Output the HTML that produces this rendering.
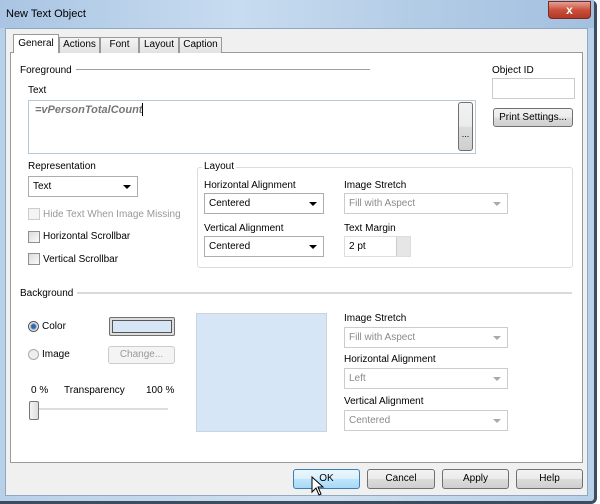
<!DOCTYPE html>
<html><head><style>
*{box-sizing:border-box;margin:0;padding:0}
body{width:600px;height:504px;background:#fff;position:relative;overflow:hidden;font-family:"Liberation Sans",sans-serif;font-size:10px;color:#000}
.a{position:absolute}
.lbl{position:absolute;font-size:10px;white-space:nowrap;line-height:13px}
.sel{position:absolute;background:#fff;border:1px solid #abadb3;height:21px;padding:3px 4px;font-size:10px;line-height:13px}
.sel.d{border-color:#ccc;color:#8a8a8a}
.arr{position:absolute;right:6px;top:8px;width:0;height:0;border-left:4px solid transparent;border-right:4px solid transparent;border-top:4px solid #000}
.sel.d .arr{border-top-color:#aaa}
.btn{position:absolute;border:1px solid #707070;border-radius:3px;background:linear-gradient(#f2f2f2,#ebebeb 50%,#dcdcdc 51%,#cfcfcf);text-align:center;font-size:10px}
.cb{position:absolute;width:12px;height:12px;border:1px solid #8e8f8f;background:linear-gradient(135deg,#dcdcdc,#fafafa)}
.tab{position:absolute;top:37px;height:16px;border:1px solid #999;border-bottom:none;background:linear-gradient(#f4f4f4,#e2e2e2);font-size:10px;text-align:center;line-height:14px}
</style></head><body>
<div class="a" style="left:0;top:0;width:597px;height:504px;background:linear-gradient(90deg,#b8d0e8,#cfe0f2 50%,#b8d0e8);border-right:3px solid #3b4d5f;border-bottom:3px solid #3b4d5f;border-radius:0 6px 6px 0"></div>
<div class="a" style="left:0;top:0;width:594px;height:28px;background:linear-gradient(90deg,#a9c5e3,#c8dcf0 40%,#b3cce6 70%,#a3c0df)"></div>
<div class="lbl" style="left:6px;top:8px;font-size:11px">New Text Object</div>
<div class="a" style="left:548px;top:1px;width:43px;height:18px;border:1px solid #7a2a22;border-radius:0 0 4px 4px;background:linear-gradient(#e8a090,#c9503c 50%,#b23a25);color:#fff;text-align:center;font-weight:bold;font-size:12px;line-height:16px">x</div>
<div class="a" style="left:5px;top:28px;width:583px;height:468px;background:#f0f0f0;border:1px solid #8fa7c0"></div>
<div class="a" style="left:10px;top:52px;width:573px;height:411px;background:#fff;border:1px solid #9a9a9a"></div>
<div class="tab" style="left:13px;top:34px;width:46px;height:19px;background:#fff;line-height:18px;z-index:2">General</div>
<div class="tab" style="left:59px;width:41px">Actions</div>
<div class="tab" style="left:100px;width:39px">Font</div>
<div class="tab" style="left:139px;width:40px">Layout</div>
<div class="tab" style="left:179px;width:43px">Caption</div>

<div class="lbl" style="left:20px;top:64px">Foreground</div>
<div class="a" style="left:76px;top:69px;width:294px;height:1px;background:#a0a0a0"></div>
<div class="lbl" style="left:28px;top:84px">Text</div>
<div class="a" style="left:28px;top:100px;width:448px;height:54px;border:1px solid #b8c8d8;background:#fff"></div>
<div class="lbl" style="left:35px;top:104px;color:#777;font-style:italic;font-weight:bold;font-size:11px">=vPersonTotalCount</div>
<div class="a" style="left:142px;top:103px;width:1px;height:13px;background:#000"></div>
<div class="btn" style="left:458px;top:102px;width:15px;height:49px;line-height:62px;font-size:9px">...</div>
<div class="lbl" style="left:492px;top:64px">Object ID</div>
<div class="a" style="left:492px;top:78px;width:83px;height:21px;border:1px solid #ccc"></div>
<div class="btn" style="left:493px;top:108px;width:80px;height:19px;line-height:17px">Print Settings...</div>

<div class="lbl" style="left:28px;top:160px">Representation</div>
<div class="sel" style="left:28px;top:176px;width:110px">Text<div class="arr"></div></div>
<div class="cb" style="left:28px;top:208px;border-color:#ccc;background:#f4f4f4"></div>
<div class="lbl" style="left:43px;top:208px;color:#999">Hide Text When Image Missing</div>
<div class="cb" style="left:28px;top:231px"></div>
<div class="lbl" style="left:43px;top:230px">Horizontal Scrollbar</div>
<div class="cb" style="left:28px;top:253px"></div>
<div class="lbl" style="left:43px;top:253px">Vertical Scrollbar</div>

<div class="a" style="left:197px;top:167px;width:376px;height:101px;border:1px solid #dcdcdc;border-radius:3px"></div>
<div class="lbl" style="left:202px;top:160px;background:#fff;padding:0 2px">Layout</div>
<div class="lbl" style="left:204px;top:179px">Horizontal Alignment</div>
<div class="sel" style="left:204px;top:193px;width:120px">Centered<div class="arr"></div></div>
<div class="lbl" style="left:204px;top:222px">Vertical Alignment</div>
<div class="sel" style="left:204px;top:236px;width:120px">Centered<div class="arr"></div></div>
<div class="lbl" style="left:344px;top:179px">Image Stretch</div>
<div class="sel d" style="left:344px;top:193px;width:164px">Fill with Aspect<div class="arr"></div></div>
<div class="lbl" style="left:344px;top:222px">Text Margin</div>
<div class="sel" style="left:344px;top:236px;width:67px;border-color:#ddd">2 pt</div>
<div class="a" style="left:396px;top:237px;width:14px;height:19px;background:#e6e6e6;border-left:1px solid #ccc"></div>

<div class="lbl" style="left:20px;top:287px">Background</div>
<div class="a" style="left:77px;top:292px;width:495px;height:2px;background:#dadada"></div>
<div class="a" style="left:28px;top:321px;width:11px;height:11px;border-radius:50%;border:1px solid #555;background:radial-gradient(#2a6ab0 30%,#9ac 45%,#eee 60%)"></div>
<div class="lbl" style="left:42px;top:320px">Color</div>
<div class="a" style="left:109px;top:317px;width:66px;height:19px;border:1px solid #707070;border-radius:2px;background:#ddd;padding:2px"><div style="width:100%;height:100%;background:#d6e6f6;border:1px solid #555"></div></div>
<div class="a" style="left:28px;top:349px;width:11px;height:11px;border-radius:50%;border:1px solid #aaa;background:#eee"></div>
<div class="lbl" style="left:42px;top:348px">Image</div>
<div class="a" style="left:108px;top:346px;width:67px;height:18px;border:1px solid #ccc;border-radius:3px;background:#f4f4f4;color:#999;text-align:center;line-height:16px">Change...</div>
<div class="lbl" style="left:31px;top:384px">0 %</div>
<div class="lbl" style="left:64px;top:384px">Transparency</div>
<div class="lbl" style="left:146px;top:384px">100 %</div>
<div class="a" style="left:36px;top:408px;width:132px;height:2px;background:#ddd"></div>
<div class="a" style="left:29px;top:401px;width:10px;height:19px;border:1px solid #777;border-radius:2px;background:linear-gradient(90deg,#f4f4f4,#ddd)"></div>
<div class="a" style="left:196px;top:313px;width:131px;height:119px;background:#d6e6f6;border:1px solid #c8d4e0"></div>

<div class="lbl" style="left:344px;top:312px">Image Stretch</div>
<div class="sel d" style="left:344px;top:327px;width:164px">Fill with Aspect<div class="arr"></div></div>
<div class="lbl" style="left:344px;top:353px">Horizontal Alignment</div>
<div class="sel d" style="left:344px;top:368px;width:164px">Left<div class="arr"></div></div>
<div class="lbl" style="left:344px;top:395px">Vertical Alignment</div>
<div class="sel d" style="left:344px;top:410px;width:164px">Centered<div class="arr"></div></div>

<div class="btn" style="left:293px;top:469px;width:67px;height:20px;line-height:18px;border-color:#3c7fb1;background:linear-gradient(#eaf6fd,#d9f0fc 50%,#bee6fd 51%,#a7d9f5)">OK</div>
<div class="btn" style="left:367px;top:469px;width:68px;height:20px;line-height:18px">Cancel</div>
<div class="btn" style="left:442px;top:469px;width:67px;height:20px;line-height:18px">Apply</div>
<div class="btn" style="left:516px;top:469px;width:67px;height:20px;line-height:18px">Help</div>
<svg class="a" style="left:311px;top:476px" width="14" height="20" viewBox="0 0 14 20"><path d="M1 1 L1 16 L5 12 L8 19 L10 18 L7 11 L12 11 Z" fill="#fff" stroke="#000" stroke-width="1"/></svg>
</body></html>
